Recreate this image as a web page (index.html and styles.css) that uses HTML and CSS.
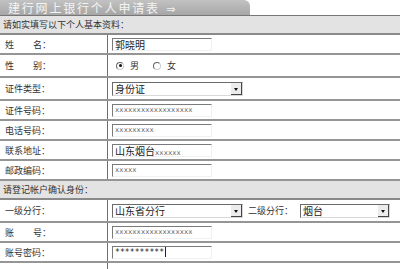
FILE: index.html
```html
<!DOCTYPE html>
<html lang="zh-CN">
<head>
    <meta charset="UTF-8">
    <title>建行网上银行个人申请表</title>
    <link rel="stylesheet" href="styles.css">
</head>
<body>
    <div class="apply-form">
        <!-- title tab -->
        <div class="tab-bar">
            <div class="tab">建行网上银行个人申请表 <span class="tab-arrow">⇒</span></div>
        </div>

        <div class="section-head">请如实填写以下个人基本资料：</div>

        <div class="row">
            <div class="label">姓<span class="gap">名</span>：</div>
            <div class="field"><span class="input"><span class="val big">郭晓明</span></span></div>
        </div>
        <div class="row tall">
            <div class="label">性<span class="gap">别</span>：</div>
            <div class="field">
                <span class="radio on"></span><span class="opt">男</span>
                <span class="radio"></span><span class="opt">女</span>
            </div>
        </div>
        <div class="row tall">
            <div class="label">证件类型：</div>
            <div class="field">
                <span class="select wide"><span class="val big">身份证</span><span class="arrow"></span></span>
            </div>
        </div>
        <div class="row">
            <div class="label">证件号码：</div>
            <div class="field"><span class="input"><span class="val">xxxxxxxxxxxxxxxxxx</span></span></div>
        </div>
        <div class="row">
            <div class="label">电话号码：</div>
            <div class="field"><span class="input"><span class="val">xxxxxxxxx</span></span></div>
        </div>
        <div class="row">
            <div class="label">联系地址：</div>
            <div class="field"><span class="input"><span class="val"><span class="big">山东烟台</span>xxxxxx</span></span></div>
        </div>
        <div class="row">
            <div class="label">邮政编码：</div>
            <div class="field"><span class="input"><span class="val">xxxxx</span></span></div>
        </div>

        <div class="section-head">请登记帐户确认身份：</div>

        <div class="row tall">
            <div class="label">一级分行：</div>
            <div class="field">
                <span class="select wide"><span class="val big">山东省分行</span><span class="arrow"></span></span>
                <span class="sub-label">二级分行：</span>
                <span class="select narrow"><span class="val big">烟台</span><span class="arrow"></span></span>
            </div>
        </div>
        <div class="row">
            <div class="label">账<span class="gap">号</span>：</div>
            <div class="field"><span class="input"><span class="val">xxxxxxxxxxxxxxxxxx</span></span></div>
        </div>
        <div class="row">
            <div class="label">账号密码：</div>
            <div class="field"><span class="input"><span class="val pwd">**********</span><span class="caret"></span></span></div>
        </div>
        <div class="row">
            <div class="label"></div>
            <div class="field"></div>
        </div>
    </div>
</body>
</html>
```

FILE: styles.css
```css
* {
    margin: 0;
    padding: 0;
    box-sizing: border-box;
}

body {
    font-family: "Noto Sans CJK SC", "DejaVu Sans", sans-serif;
    background-color: #fff;
    color: #333;
    font-size: 9px;
    height: 269px;
    overflow: hidden;
}

.apply-form {
    width: 400px;
}

/* === TITLE TAB === */
.tab-bar {
    height: 16px;
    border-bottom: 1px solid #777;
}

.tab {
    width: 250px;
    height: 15px;
    background: linear-gradient(180deg, #c2c2c2 0%, #a6a6a6 100%);
    border-top-right-radius: 6px;
    color: #f4f4f4;
    font-size: 12px;
    line-height: 15px;
    letter-spacing: 1.8px;
    padding-left: 8px;
    white-space: nowrap;
}

.tab-arrow {
    font-family: "DejaVu Sans", sans-serif;
    font-size: 11px;
    margin-left: 2px;
}

/* === SECTION HEADERS === */
.section-head {
    height: 19px;
    line-height: 17px;
    background-color: #e3e3e3;
    border-bottom: 2px solid #8a8a8a;
    padding-left: 3px;
    color: #333;
}

/* === FORM ROWS === */
.row {
    display: grid;
    grid-template-columns: 108px 1fr;
    height: 20px;
    border-bottom: 2px solid #959595;
}

.row.tall {
    height: 23px;
}

.label {
    border-right: 1px solid #6f6f6f;
    padding-left: 5px;
    display: flex;
    align-items: center;
    color: #333;
    white-space: nowrap;
}

.gap {
    margin-left: 19px;
}

.field {
    display: flex;
    align-items: center;
    padding-left: 4px;
    white-space: nowrap;
}

/* text inputs, drawn inset */
.input {
    width: 100px;
    height: 13px;
    border-top: 1px solid #7a7a7a;
    border-left: 1px solid #7a7a7a;
    border-bottom: 1px solid #f0f0f0;
    border-right: 1px solid #f0f0f0;
    display: flex;
    align-items: center;
    padding-left: 2px;
}

.val {
    font-family: "DejaVu Sans Mono", monospace;
    font-size: 7px;
    color: #666;
    letter-spacing: 0.1px;
}

.val.big,
.val .big {
    font-family: "Noto Sans CJK SC", sans-serif;
    font-size: 10px;
    color: #222;
    letter-spacing: 0;
}

.val.pwd {
    font-size: 8px;
    color: #222;
}

.caret {
    width: 1px;
    height: 10px;
    background-color: #222;
    margin-left: 1px;
}

/* radios */
.radio {
    width: 8px;
    height: 8px;
    border-radius: 50%;
    border: 1px solid #ccc;
    border-top-color: #666;
    border-left-color: #666;
    position: relative;
    margin-left: 4px;
}

.radio.on::after {
    content: "";
    position: absolute;
    left: 1.5px;
    top: 1.5px;
    width: 3px;
    height: 3px;
    border-radius: 50%;
    background-color: #111;
}

.opt {
    margin-left: 6px;
    margin-right: 10px;
    font-size: 9px;
}

/* selects */
.select {
    height: 14px;
    border-top: 1px solid #6a6a6a;
    border-left: 1px solid #6a6a6a;
    border-bottom: 1px solid #d8d8d8;
    border-right: 1px solid #d8d8d8;
    display: flex;
    align-items: center;
    justify-content: space-between;
    padding-left: 2px;
}

.select.wide {
    width: 131px;
}

.select.narrow {
    width: 90px;
}

.arrow {
    width: 11px;
    height: 12px;
    background-color: #ececec;
    border-right: 1px solid #444;
    border-bottom: 1px solid #444;
    position: relative;
}

.arrow::after {
    content: "";
    position: absolute;
    left: 3px;
    top: 5px;
    border-left: 2.5px solid transparent;
    border-right: 2.5px solid transparent;
    border-top: 3px solid #111;
}

.sub-label {
    margin-left: 5px;
    margin-right: 7px;
    color: #333;
}
```
